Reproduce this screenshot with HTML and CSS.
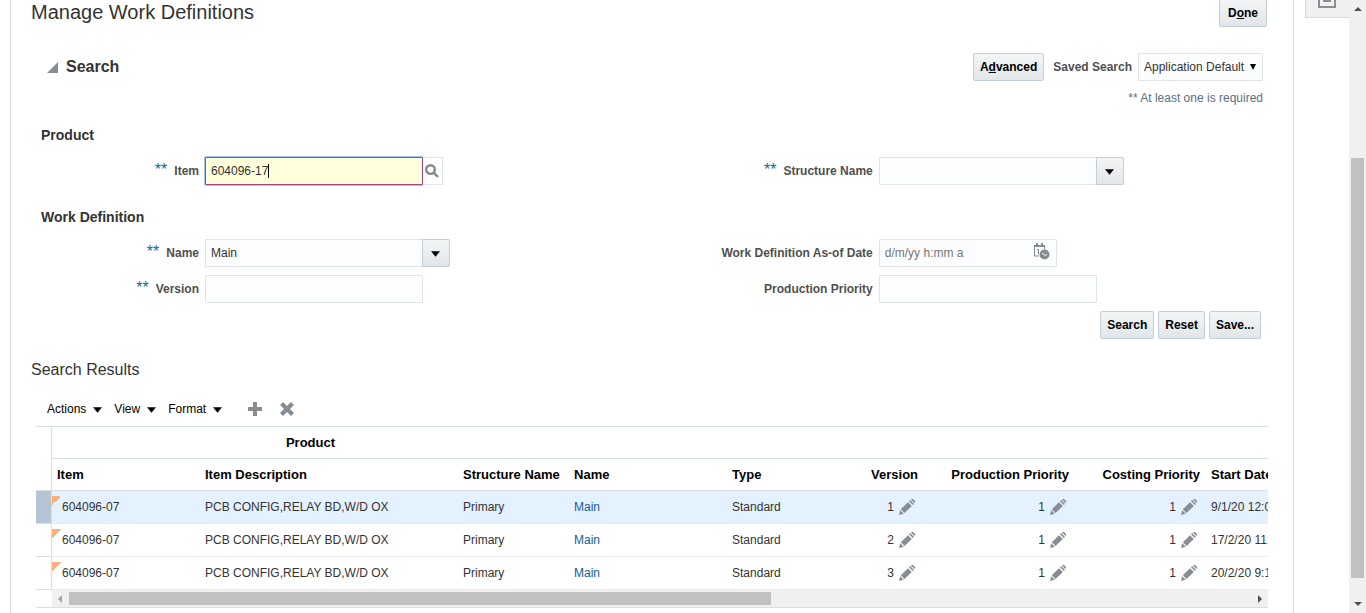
FILE: index.html
```html
<!DOCTYPE html>
<html lang="en">
<head>
<meta charset="utf-8">
<title>Manage Work Definitions</title>
<link rel="stylesheet" href="styles.css">
</head>
<body>
<svg class="defs" aria-hidden="true">
  <symbol id="pencil" viewBox="0 0 16 16"><path d="M0 16l1.200-4.800 3.600 3.600z"/><path d="M1.800 10.200L9 3.200l3.800 3.800-7.200 7z"/><path d="M10 2.300l1.200-1.200 3.800 3.800-1.200 1.200zM12 .5l.8-.5h1.200l2 2v1.200l-.5.800z"/></symbol>
  <symbol id="down" viewBox="0 0 10 6"><path d="M0 0h10L5 6z"/></symbol>
</svg>
<main class="panel">
  <header class="title-row">
    <h1 class="title">Manage Work Definitions</h1>
    <button class="btn" type="button">D<u>o</u>ne</button>
  </header>

  <form class="search">
    <div class="search-head">
      <svg class="disclose" viewBox="0 0 11 11"><path d="M11 0v11H0z"/></svg>
      <h2 class="search-title">Search</h2>
      <button class="btn" type="button">A<u>d</u>vanced</button>
      <label class="saved-label" for="saved">Saved Search</label>
      <span class="saved">
        <select id="saved" class="control saved-select"><option>Application Default</option></select>
        <svg class="saved-arrow" viewBox="0 0 6 6"><path d="M0 0h6L3 6z"/></svg>
      </span>
    </div>
    <p class="hint">** At least one is required</p>

    <h3 class="group">Product</h3>
    <div class="fields">
      <div class="field">
        <label class="label" for="item"><span class="req">**</span>Item</label>
        <input id="item" class="control focused" type="text" value="604096-17">
        <button class="lookup" type="button" aria-label="Search items"><svg viewBox="0 0 14 14"><circle cx="5.500" cy="5.500" r="4.300"/><path d="M8.500 8.500l4.500 4.500"/></svg></button>
      </div>
      <div class="field">
        <label class="label" for="structure"><span class="req">**</span>Structure Name</label>
        <span class="combo"><select id="structure" class="control combo-select"><option></option></select><span class="combo-arrow"><svg><use href="#down"/></svg></span></span>
      </div>
    </div>

    <h3 class="group">Work Definition</h3>
    <div class="fields">
      <div class="field">
        <label class="label" for="name"><span class="req">**</span>Name</label>
        <span class="combo"><select id="name" class="control combo-select"><option>Main</option></select><span class="combo-arrow"><svg><use href="#down"/></svg></span></span>
      </div>
      <div class="field">
        <label class="label" for="asof">Work Definition As-of Date</label>
        <span class="date">
          <input id="asof" class="control date-input" type="text" placeholder="d/m/yy h:mm a">
          <svg class="date-icon" viewBox="0 0 17 17"><path class="line" d="M6 13H1.500V3h10v3"/><path d="M1 2h11v2H1zM3 0h2v3H3zM8 0h2v3H8zM4 6h2v5H5V7H4z"/><circle cx="11.500" cy="11.500" r="5"/><path class="hand" d="M9 10l2.500 2H14"/></svg>
        </span>
      </div>
      <div class="field">
        <label class="label" for="version"><span class="req">**</span>Version</label>
        <input id="version" class="control" type="text">
      </div>
      <div class="field">
        <label class="label" for="priority">Production Priority</label>
        <input id="priority" class="control" type="text">
      </div>
    </div>
    <div class="actions">
      <button class="btn" type="button">Search</button>
      <button class="btn" type="button">Reset</button>
      <button class="btn" type="button">Save...</button>
    </div>
  </form>

  <section class="results">
    <h2 class="results-title">Search Results</h2>
    <div class="toolbar">
      <button class="menu" type="button">Actions<svg><use href="#down"/></svg></button>
      <button class="menu" type="button">View<svg><use href="#down"/></svg></button>
      <button class="menu" type="button">Format<svg><use href="#down"/></svg></button>
      <button class="tool" type="button" aria-label="Add"><svg viewBox="0 0 14 14"><path d="M5 0h4v5h5v4H9v5H5V9H0V5h5z"/></svg></button>
      <button class="tool" type="button" aria-label="Delete"><svg viewBox="0 0 14 14"><path d="M3 0l4 4 4-4 3 3-4 4 4 4-3 3-4-4-4 4-3-3 4-4-4-4z"/></svg></button>
    </div>
    <div class="grid">
      <div class="grid-view">
      <table class="table">
        <colgroup><col class="c-gutter"><col class="c-item"><col class="c-desc"><col class="c-struct"><col class="c-name"><col class="c-type"><col class="c-ver"><col class="c-prod"><col class="c-cost"><col class="c-date"></colgroup>
        <thead>
          <tr><th class="gutter" rowspan="2"></th><th class="span" colspan="3">Product</th><th colspan="6"></th></tr>
          <tr><th>Item</th><th>Item Description</th><th>Structure Name</th><th>Name</th><th>Type</th><th class="num">Version</th><th class="num">Production Priority</th><th class="num">Costing Priority</th><th>Start Date</th></tr>
        </thead>
        <tbody>
          <tr class="selected"><td class="gutter"></td><td class="item">604096-07</td><td>PCB CONFIG,RELAY BD,W/D OX</td><td>Primary</td><td><a href="#">Main</a></td><td>Standard</td><td class="num">1<svg><use href="#pencil"/></svg></td><td class="num">1<svg><use href="#pencil"/></svg></td><td class="num">1<svg><use href="#pencil"/></svg></td><td>9/1/20 12:00 AM</td></tr>
          <tr><td class="gutter"></td><td class="item">604096-07</td><td>PCB CONFIG,RELAY BD,W/D OX</td><td>Primary</td><td><a href="#">Main</a></td><td>Standard</td><td class="num">2<svg><use href="#pencil"/></svg></td><td class="num">1<svg><use href="#pencil"/></svg></td><td class="num">1<svg><use href="#pencil"/></svg></td><td>17/2/20 11:00 AM</td></tr>
          <tr><td class="gutter"></td><td class="item">604096-07</td><td>PCB CONFIG,RELAY BD,W/D OX</td><td>Primary</td><td><a href="#">Main</a></td><td>Standard</td><td class="num">3<svg><use href="#pencil"/></svg></td><td class="num">1<svg><use href="#pencil"/></svg></td><td class="num">1<svg><use href="#pencil"/></svg></td><td>20/2/20 9:10 AM</td></tr>
        </tbody>
      </table>
      </div>
      <div class="hbar">
        <svg class="left" viewBox="0 0 4 8"><path d="M4 0v8L0 4z"/></svg>
        <div class="htrack"><div class="hthumb"></div></div>
        <svg viewBox="0 0 4 8"><path d="M0 0v8l4-4z"/></svg>
      </div>
    </div>
  </section>
</main>
<aside class="side"><button class="side-tab" type="button" aria-label="Open panel"><svg viewBox="0 0 18 18"><path class="frame" d="M1 1h16v16H1z"/><path d="M5 9h8v3H5z"/></svg></button></aside>
<div class="vbar">
  <svg viewBox="0 0 8 4"><path d="M0 4h8L4 0z"/></svg>
  <div class="vtrack"><div class="vthumb"></div></div>
  <svg viewBox="0 0 8 4"><path d="M0 0h8L4 4z"/></svg>
</div>
</body>
</html>
```
FILE: styles.css
```css
* { box-sizing: border-box; }

body {
  margin: 0;
  height: 100vh;
  display: flex;
  overflow: hidden;
  background: #fff;
  color: #333;
  font: 12px/16px "Liberation Sans", Arial, sans-serif;
}

h1, h2, h3, p { margin: 0; }
svg { display: block; fill: #000; }
button, input, select { font: inherit; color: inherit; }
.defs { display: none; }

.panel {
  flex: 1;
  min-width: 0;
  margin-left: 10px;
  padding: 0 25px 0 20px;
  border: solid #d6dfe6;
  border-width: 0 1px;
}

.btn {
  height: 28px;
  padding: 0 6px;
  border: 1px solid #c4ced7;
  border-radius: 2px;
  background: linear-gradient(#f3f5f6, #e2e6e9);
  color: #000;
  font-weight: bold;
}

.title-row {
  display: flex;
  justify-content: space-between;
  margin-top: -1px;
  padding-right: 1px;
}
.title { font-size: 20px; line-height: 26px; font-weight: normal; }
.title-row .btn { padding: 0 8px; }

.search-head {
  display: flex;
  align-items: center;
  margin-top: 26px;
  padding: 0 5px 0 16px;
}
.disclose { width: 11px; height: 11px; fill: #878d92; }
.search-title { flex: 1; margin-left: 8px; font-size: 16px; line-height: 20px; }
.saved-label { margin: 0 6px 0 9px; color: #4f4f4f; font-weight: bold; }
.saved { display: grid; align-items: center; }
.saved > * { grid-area: 1 / 1; }
.saved-arrow { justify-self: end; width: 6px; height: 6px; margin-right: 7px; pointer-events: none; }
.hint { margin-top: 9px; padding-right: 5px; text-align: right; color: #5b7083; }

.control {
  width: 218px;
  height: 28px;
  padding: 0 5px;
  border: 1px solid #dfe4e7;
  border-radius: 1px;
  background: #fcfdfe;
  appearance: none;
  outline: none;
}
.control.saved-select { width: 125px; }
.control.combo-select, .control.date-input { width: 100%; }
.control::placeholder { color: #757575; opacity: 1; }
.focused {
  background: linear-gradient(#000, #000) 62px center / 1px 14px no-repeat #ffffdc;
  border-color: #a8437f;
  box-shadow: 0 0 0 1px #a9c6f5;
}

.group { margin: 21px 0 14px; padding-left: 10px; font-size: 14px; }
.fields { display: grid; grid-template-columns: 11fr 9fr; row-gap: 8px; padding: 0 2px 0 10px; }
.field { display: flex; align-items: center; }
.label {
  display: flex;
  justify-content: flex-end;
  width: 158px;
  margin-right: 6px;
  color: #4f4f4f;
  font-weight: bold;
  white-space: nowrap;
}
.req { margin-right: 7px; color: #0a6aa8; font-size: 16px; line-height: 14px; font-weight: normal; }
.fields + .group { margin-top: 24px; }

.lookup {
  width: 20px;
  height: 28px;
  padding: 0 2px;
  border: 1px solid #dfe4e7;
  border-left: 0;
  background: #fff;
}
.lookup svg { width: 14px; height: 14px; fill: none; stroke: #858a8e; stroke-width: 2.4; }

.combo { display: grid; width: 245px; }
.combo > * { grid-area: 1 / 1; }
.combo-arrow {
  display: grid;
  place-content: center;
  justify-self: end;
  width: 28px;
  height: 28px;
  padding: 2px 1px 0 0;
  border: 1px solid #c4ced7;
  border-radius: 0 2px 2px 0;
  background: linear-gradient(#f3f5f6, #e2e6e9);
  pointer-events: none;
}
.combo-arrow svg, .menu svg { width: 9px; height: 6px; }

.date { display: grid; width: 178px; }
.date > * { grid-area: 1 / 1; }
.date-icon { justify-self: end; width: 17px; height: 17px; margin: 4px 7px; fill: #858a8e; pointer-events: none; }
.date-icon .line { fill: none; stroke: #858a8e; }
.date-icon .hand { fill: none; stroke: #fff; }

.actions { display: flex; justify-content: flex-end; gap: 4px; margin-top: 8px; padding-right: 7px; }

.results-title { margin-top: 21px; font-size: 16px; line-height: 20px; font-weight: normal; }
.toolbar { display: flex; align-items: center; height: 28px; margin-top: 15px; padding-left: 16px; }
.menu { display: flex; align-items: center; gap: 7px; margin-right: 12px; padding: 0; border: 0; background: none; color: #000; }
.menu svg { margin-top: 2px; }
.tool { margin: 0 4px 0 14px; padding: 0; border: 0; background: none; }
.tool svg { width: 14px; height: 14px; fill: #878d92; }

.grid { margin: 3px 0 0 5px; border: solid #d6dfe6; border-width: 1px 0; }
.grid-view { overflow: hidden; }
.table { width: 1400px; table-layout: fixed; border-collapse: separate; border-spacing: 0; }
.c-gutter { width: 16px; }
.c-item { width: 148px; }
.c-desc { width: 258px; }
.c-struct { width: 111px; }
.c-name { width: 158px; }
.c-type { width: 111px; }
.c-ver { width: 86px; }
.c-prod { width: 151px; }
.c-cost { width: 131px; }

th, td { padding: 0 5px; text-align: left; white-space: nowrap; }
th { height: 32px; border-bottom: 1px solid #d6dfe6; color: #000; font-size: 13px; }
td { height: 33px; border-bottom: 1px solid #e8ebee; }
.table .gutter { padding: 0; border-right: 1px solid #d6dfe6; border-bottom-color: #d6dfe6; }
.table .span { text-align: center; }
.table .num { padding-right: 6px; text-align: right; }
.num svg { display: inline-block; width: 16px; height: 16px; margin: 0 3px 0 5px; vertical-align: middle; fill: #878d92; }
.table .item {
  padding-left: 10px;
  background: linear-gradient(135deg, #fdb07c 50%, transparent 50%) 0 5px / 9px 9px no-repeat;
}
.selected td, .table .selected .item { background-color: #e4f1ff; }
.selected .gutter { background-color: #b4c6d6; }
a { color: #145c9e; text-decoration: none; }

.hbar { display: flex; align-items: center; height: 17px; margin-left: 16px; padding: 0 6px; background: #f0f0f0; }
.hbar svg { width: 4px; height: 8px; fill: #505050; }
.hbar .left { fill: #a3a3a3; }
.htrack { flex: 1; margin: 0 7px; }
.hthumb { width: 59.4%; height: 13px; background: #c1c1c1; }

.side { width: 55px; padding-left: 11px; }
.side-tab {
  display: flex;
  align-items: flex-end;
  width: 100%;
  height: 18px;
  padding: 0 0 9px 12px;
  border: solid #d6dadd;
  border-width: 0 0 1px 1px;
  background: #f0f0f0;
}
.side-tab svg { width: 18px; height: 18px; flex: none; fill: #878d92; }
.side-tab .frame { fill: none; stroke: #878d92; stroke-width: 2; }

.vbar { display: flex; flex-direction: column; align-items: center; width: 17px; padding: 7px 0; background: #f0f0f0; }
.vbar svg { width: 8px; height: 4px; fill: #505050; }
.vtrack { flex: 1; display: flex; flex-direction: column; justify-content: flex-end; padding-bottom: 24px; }
.vthumb { width: 13px; height: 74%; background: #c1c1c1; }
```
